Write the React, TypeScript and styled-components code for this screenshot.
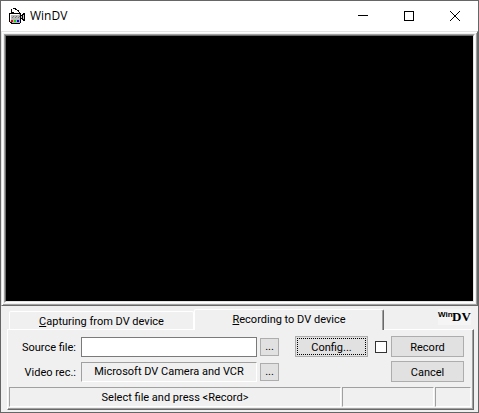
import React from "react";
import styled, { createGlobalStyle, css } from "styled-components";

const GlobalStyle = createGlobalStyle`
  * { box-sizing: border-box; }
  body { margin: 0; background: #f0f0f0; }
  button, input { font: inherit; color: inherit; }
`;

const sunken = css`
  border: 1px solid;
  border-color: #a0a0a0 #fff #fff #a0a0a0;
`;

const Window = styled.div`
  display: flex;
  flex-direction: column;
  min-height: 100vh;
  border: 1px solid #666;
  background: #f0f0f0;
  color: #000;
  font: 11px/14px Roboto, "Liberation Sans", Arial, sans-serif;
`;

const TitleBar = styled.header`
  display: flex;
  align-items: center;
  height: 30px;
  padding-left: 8px;
  background: #fff;
`;

const Title = styled.h1`
  flex: 1;
  margin: 0;
  padding-left: 4px;
  font: 12px/16px "Open Sans", "Noto Sans", sans-serif;
`;

const CaptionButton = styled.button`
  display: grid;
  place-items: center;
  width: 46px;
  height: 29px;
  padding: 0;
  border: 0;
  background: transparent;
`;

const PreviewFrame = styled.main`
  display: flex;
  flex: 1;
  min-height: 120px;
  padding: 1px;
  border: 1px solid;
  border-color: #e3e3e3 #696969 #696969 #e3e3e3;
  box-shadow: inset 1px 1px #fff, inset -1px -1px #a0a0a0;
`;

const PreviewGap = styled.div`
  display: flex;
  flex: 1;
  padding: 1px;
`;

const PreviewEdge = styled.div`
  display: flex;
  flex: 1;
  ${sunken}
`;

const Preview = styled.div`
  flex: 1;
  border: 1px solid;
  border-color: #696969 #e3e3e3 #e3e3e3 #696969;
  background: #000;
`;

const Controls = styled.section`
  padding: 3px 4px 2px 6px;
`;

const TabBar = styled.div`
  display: flex;
  align-items: flex-end;
  padding-left: 2px;
`;

const Tab = styled.button<{ $active?: boolean }>`
  position: relative;
  width: ${(p) => (p.$active ? 190 : 185)}px;
  height: ${(p) => (p.$active ? 21 : 18)}px;
  margin-bottom: ${(p) => (p.$active ? -1 : 0)}px;
  padding: ${(p) => (p.$active ? "0" : "3px 0 0")};
  border: 1px solid;
  border-color: #fff ${(p) => (p.$active ? "#696969" : "#fff")} transparent #fff;
  border-bottom: 0;
  border-radius: 2px 2px 0 0;
  background: #f0f0f0;
  box-shadow: ${(p) => (p.$active ? "inset -1px 0 #a0a0a0" : "none")};
`;

const LogoSlot = styled.div`
  flex: 1;
  display: flex;
  justify-content: flex-end;
  align-self: flex-start;
  padding-right: 3px;
`;

const Page = styled.form`
  padding: 6px 2px 2px 1px;
  border: 1px solid;
  border-color: #fff #696969 #696969 #fff;
  box-shadow: inset -1px -1px #a0a0a0;
`;

const Fields = styled.div`
  display: flex;
  justify-content: space-between;
  gap: 12px;
  padding-right: 7px;
`;

const SourceFields = styled.div`
  flex: 0 1 270px;
  display: grid;
  grid-template-columns: 69px 1fr 19px;
  gap: 4px 3px;
  grid-auto-rows: 21px;
  align-items: center;
`;

const Actions = styled.div`
  display: grid;
  grid-template-columns: 73px 15px 73px;
  gap: 4px;
  grid-auto-rows: 21px;
  align-items: center;
`;

const Label = styled.label`
  padding: 2px 2px 0 0;
  text-align: right;
  white-space: nowrap;
`;

const TextBox = styled.input`
  width: 100%;
  min-width: 0;
  height: 20px;
  padding: 0 4px;
  border: 1px solid #7a7a7a;
  border-radius: 0;
  background: #fff;
`;

const DeviceName = styled.output`
  height: 20px;
  ${sunken}
  line-height: 18px;
  text-align: center;
  white-space: nowrap;
`;

const Button = styled.button<{ $small?: boolean; $focused?: boolean }>`
  width: 100%;
  height: ${(p) => (p.$small ? 18 : 21)}px;
  padding: ${(p) => (p.$small ? "0" : "2px 0 0")};
  border: 1px solid #adadad;
  border-radius: 0;
  background: #e1e1e1;
  outline: ${(p) => (p.$focused ? "1px dotted #000" : "none")};
  outline-offset: -3px;
`;

const CancelButton = styled(Button)`
  grid-column: 3;
`;

const Check = styled.input`
  appearance: none;
  justify-self: end;
  width: 12px;
  height: 12px;
  margin: 0;
  border: 1px solid #333;
  background: #fff;
  &:checked { background: #333; }
`;

const StatusBar = styled.footer`
  display: grid;
  grid-template-columns: 1fr 92px 36px;
  gap: 1px;
  margin-top: 5px;
`;

const StatusPane = styled.div`
  height: 20px;
  ${sunken}
  line-height: 20px;
  text-align: center;
  white-space: nowrap;
`;

const LogoDrawing = styled.svg`
  overflow: visible;
`;

const CameraIcon = () => (
  <svg width="17" height="17" shapeRendering="crispEdges" aria-hidden="true">
    <path d="M2 1H4V0H7V1H8V2H10V4H11V5H12V15H11V16H2V15H1V14H0V5H2Z" fill="#000" />
    <path d="M3 1H6V2H8V3H9V4H10V5H5V4H3Z" fill="#fff" />
    <path d="M1 6H11V15H3V14H1Z" fill="#b8b8b8" />
    <path d="M1 6H10V7H2V13H1Z" fill="#fff" />
    <path d="M3 9H4V8H5V9H4V10H3ZM6 9H7V8H8V9H7V10H6ZM9 9H10V8H11V9H10V10H9Z" fill="#777" />
    <path d="M2 12H4V14H2Z" fill="#f00" />
    <path d="M5 12H7V14H5Z" fill="#00e000" />
    <path d="M8 12H10V14H8Z" fill="#00f" />
    <path d="M12 7H13V6H14V5H16V13H14V12H13V11H12Z" fill="#000" />
    <path d="M12 8H13V10H12ZM14 7H15V11H14Z" fill="#c0c0c0" />
  </svg>
);

const Logo = () => (
  <LogoDrawing width="33" height="16" role="img" aria-label="WinDV">
    <rect width="33" height="16" fill="#f5f5f5" />
    <text x="0" y="8" fontFamily="Liberation Sans, sans-serif" fontSize="8" fontWeight="700">Win</text>
    <text x="14" y="12" fontFamily="Liberation Serif, serif" fontSize="13" fontWeight="700">DV</text>
  </LogoDrawing>
);

export default function App() {
  return (
    <>
      <GlobalStyle />
      <Window>
        <TitleBar>
          <CameraIcon />
          <Title>WinDV</Title>
          <CaptionButton aria-label="Minimize">
            <svg width="10" height="10" shapeRendering="crispEdges"><path d="M0 4H10V5H0Z" /></svg>
          </CaptionButton>
          <CaptionButton aria-label="Maximize">
            <svg width="10" height="10" shapeRendering="crispEdges"><path d="M0 0H10V10H0ZM1 1V9H9V1Z" fillRule="evenodd" /></svg>
          </CaptionButton>
          <CaptionButton aria-label="Close">
            <svg width="10" height="10"><path d="M0 0L10 10M10 0L0 10" stroke="#000" /></svg>
          </CaptionButton>
        </TitleBar>

        <PreviewFrame>
          <PreviewGap>
            <PreviewEdge>
              <Preview aria-label="Video preview" />
            </PreviewEdge>
          </PreviewGap>
        </PreviewFrame>

        <Controls>
          <TabBar role="tablist">
            <Tab type="button" role="tab" aria-selected="false"><u>C</u>apturing from DV device</Tab>
            <Tab type="button" role="tab" aria-selected="true" $active><u>R</u>ecording to DV device</Tab>
            <LogoSlot><Logo /></LogoSlot>
          </TabBar>
          <Page onSubmit={(e: React.FormEvent) => e.preventDefault()}>
            <Fields>
              <SourceFields>
                <Label htmlFor="source">Source file:</Label>
                <TextBox id="source" type="text" />
                <Button type="button" $small aria-label="Browse source file">...</Button>
                <Label htmlFor="device">Video rec.:</Label>
                <DeviceName id="device">Microsoft DV Camera and VCR</DeviceName>
                <Button type="button" $small aria-label="Choose video recorder">...</Button>
              </SourceFields>
              <Actions>
                <Button type="button" $focused>Config...</Button>
                <Check type="checkbox" aria-label="Enable recording" />
                <Button type="submit">Record</Button>
                <CancelButton type="button">Cancel</CancelButton>
              </Actions>
            </Fields>
            <StatusBar>
              <StatusPane>Select file and press &lt;Record&gt;</StatusPane>
              <StatusPane />
              <StatusPane />
            </StatusBar>
          </Page>
        </Controls>
      </Window>
    </>
  );
}
